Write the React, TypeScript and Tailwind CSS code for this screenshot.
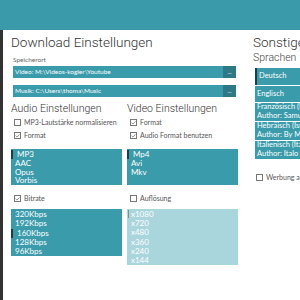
import { Check } from "lucide-react";

const font = { fontFamily: "Lato, 'Open Sans', sans-serif" };
const light = { fontFamily: "Roboto, Lato, sans-serif", fontWeight: 300 };

function Box({ checked, label }: { checked?: boolean; label: string }) {
  return (
    <div className="flex h-[9px] items-center gap-[3px] whitespace-nowrap pl-[3px] text-[7px] leading-none text-[#555]">
      <span className="flex h-[7px] w-[7px] shrink-0 items-center justify-center border border-[#777] bg-white">
        {checked && <Check size={6} strokeWidth={3} className="text-[#444]" />}
      </span>
      <span>{label}</span>
    </div>
  );
}

function List({
  items,
  selected,
  light,
  height,
  rowH,
}: {
  items: string[];
  selected?: number;
  light?: boolean;
  height: string;
  rowH: string;
}) {
  return (
    <div
      className={`relative overflow-hidden pt-[1px] ${height} ${
        light ? "bg-[#a9d5dd]" : "bg-[#3a9bab]"
      }`}
    >
      {light && (
        <span className="absolute left-[1px] top-[1px] h-[8px] w-[1px] bg-[#888]" />
      )}
      {items.map((it, i) => (
        <div
          key={it}
          className={`pl-[4px] text-[8px] text-white ${rowH} ${
            i === selected ? "border-l-[2px] border-[#1d3d44] pl-[2px]" : ""
          }`}
        >
          {it}
        </div>
      ))}
    </div>
  );
}

function PathField({ text }: { text: string }) {
  return (
    <div className="ml-[2px] flex h-[12px] w-[223px] bg-[#3a9bab]">
      <div className="flex-1 pl-[2px] text-[6.5px] leading-[12px] text-white">
        {text}
      </div>
      <div className="flex w-[13px] items-center justify-center bg-[#2d7986] text-[6px] leading-none text-white">
        ...
      </div>
    </div>
  );
}

function Lang({ name, author, first }: { name: string; author?: string; first?: boolean }) {
  return (
    <div
      className={`w-[60px] bg-[#3a9bab] pl-[2px] text-[7.5px] leading-[8.5px] text-white ${
        author ? "h-[18px]" : "h-[16px] pt-[4px]"
      } ${first ? "h-[17px] border-l-[2px] border-[#1d3d44] text-[#8cc9d2]" : ""}`}
    >
      <div className="whitespace-nowrap">{name}</div>
      {author && <div className="whitespace-nowrap">{author}</div>}
    </div>
  );
}

export default function App() {
  return (
    <div className="flex h-[300px] w-[300px] flex-col overflow-hidden bg-white" style={font}>
      <div className="h-[30px] shrink-0 bg-[#3a9aaa]" />
      <div className="flex flex-1">
        <div className="w-[3px] shrink-0 bg-[#333]" />
        <div className="flex shrink-0 pl-[8px]">
          <div className="w-[227px] shrink-0">
            <h1 className="mt-[2px] h-[20px] text-[13.5px] leading-[20px] text-[#333]" style={light}>
              Download Einstellungen
            </h1>
            <div className="mt-[3px] h-[9px] pl-[2px] text-[6.5px] leading-[9px] text-[#666]">
              Speicherort
            </div>
            <div className="mt-[2px] flex flex-col gap-[7px]">
              <PathField text="Video: M:\Videos-kogler\Youtube" />
              <PathField text="Musik: C:\Users\thoma\Music" />
            </div>
            <div className="mt-[4px] flex gap-[5px]">
              <div className="w-[111px]">
                <h2 className="h-[15px] text-[10.5px] leading-[15px] text-[#333]" style={light}>
                  Audio Einstellungen
                </h2>
                <div className="mt-[2px] flex flex-col gap-[4px]">
                  <Box label="MP3-Lautstärke normalisieren" />
                  <Box checked label="Format" />
                </div>
                <div className="mt-[9px]">
                  <List
                    items={["MP3", "AAC", "Opus", "Vorbis"]}
                    selected={0}
                    height="h-[36px]"
                    rowH="h-[8.8px] leading-[8.8px]"
                  />
                </div>
                <div className="mt-[9px]">
                  <Box checked label="Bitrate" />
                </div>
                <div className="mt-[6px]">
                  <List
                    items={["320Kbps", "192Kbps", "160Kbps", "128Kbps", "96Kbps"]}
                    selected={2}
                    height="h-[47px]"
                    rowH="h-[9.3px] leading-[9.3px]"
                  />
                </div>
              </div>
              <div className="w-[111px]">
                <h2 className="h-[15px] text-[10.5px] leading-[15px] text-[#333]" style={light}>
                  Video Einstellungen
                </h2>
                <div className="mt-[2px] flex flex-col gap-[4px]">
                  <Box checked label="Format" />
                  <Box checked label="Audio Format benutzen" />
                </div>
                <div className="mt-[9px]">
                  <List
                    items={["Mp4", "Avi", "Mkv"]}
                    selected={0}
                    height="h-[36px]"
                    rowH="h-[8.8px] leading-[8.8px]"
                  />
                </div>
                <div className="mt-[9px]">
                  <Box label="Auflösung" />
                </div>
                <div className="mt-[6px]">
                  <List
                    items={["x1080", "x720", "x480", "x360", "x240", "x144"]}
                    light
                    height="h-[56px]"
                    rowH="h-[9.2px] leading-[9.2px]"
                  />
                </div>
              </div>
            </div>
          </div>
          <div className="ml-[15px] w-[60px] shrink-0">
            <h1 className="mt-[2px] h-[20px] whitespace-nowrap text-[13.5px] leading-[20px] text-[#333]" style={light}>
              Sonstiges
            </h1>
            <div className="h-[12px] text-[10.5px] leading-[12px] text-[#444]" style={light}>
              Sprachen
            </div>
            <div className="ml-[2px] mt-[4px] flex flex-col gap-[1px]">
              <Lang name="Deutsch" first />
              <Lang name="Englisch" />
              <Lang name="Französisch (Frankreich)" author="Author: Samuel" />
              <Lang name="Hebräisch (Israel)" author="Author: By Mik" />
              <Lang name="Italienisch (Italien)" author="Author: Italo" />
            </div>
            <div className="mt-[14px]">
              <Box label="Werbung anzeigen" />
            </div>
          </div>
        </div>
      </div>
    </div>
  );
}
